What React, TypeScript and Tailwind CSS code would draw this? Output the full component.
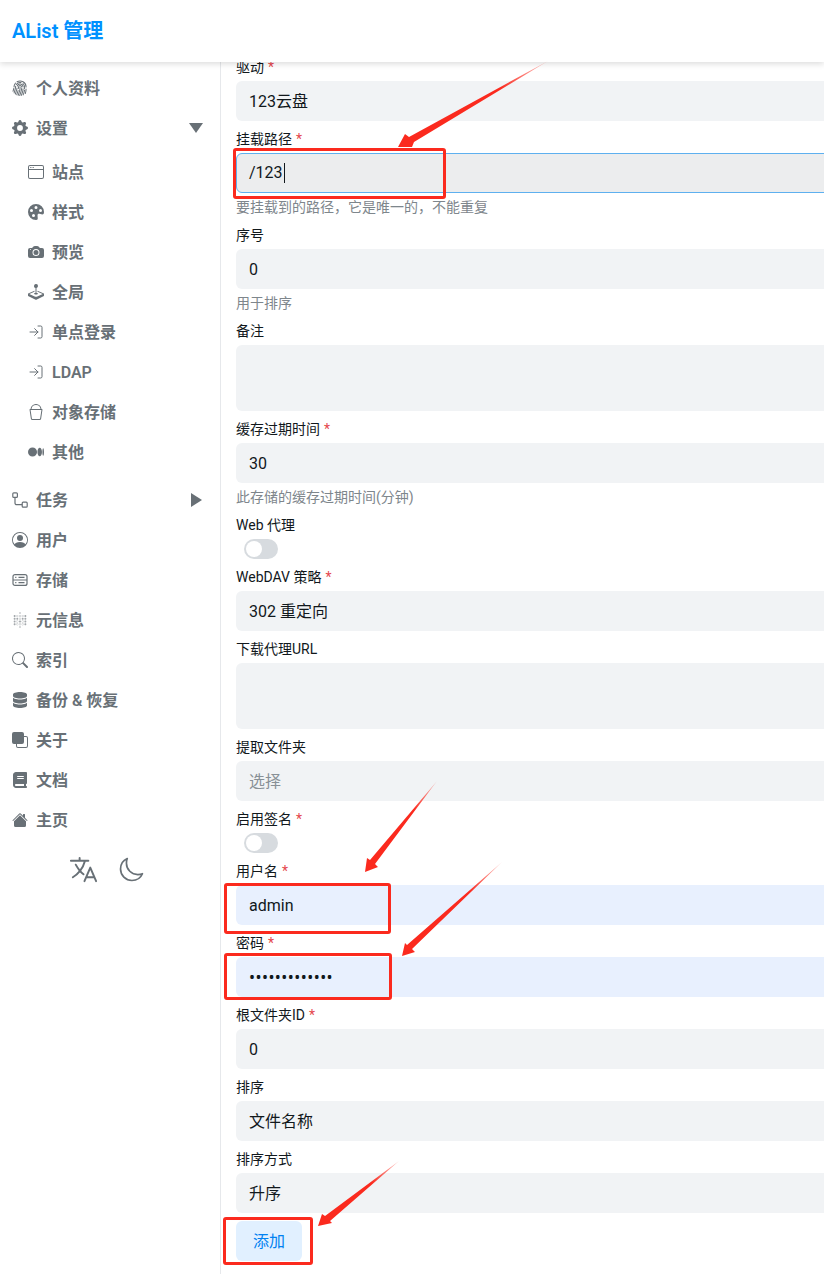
import type { ReactNode } from "react";
import {
  BsFingerprint,
  BsGearFill,
  BsWindow,
  BsPaletteFill,
  BsCameraFill,
  BsJoystick,
  BsBucket,
  BsMedium,
  BsPersonCircle,
  BsSearch,
  BsFront,
  BsHouseFill,
} from "react-icons/bs";
import { FaDatabase, FaBook } from "react-icons/fa6";
import { FiLogIn } from "react-icons/fi";
import { SiMetabase } from "react-icons/si";
import { IoLanguageOutline, IoMoonOutline } from "react-icons/io5";

const TasksIcon = () => (
  <svg width="16" height="16" viewBox="0 0 16 16" fill="none" stroke="currentColor" strokeWidth="1.2">
    <rect x="0.8" y="0.8" width="4.6" height="4.6" rx="1" />
    <rect x="10.2" y="10.2" width="5" height="5" rx="1" />
    <path d="M3 5.4V11a1.7 1.7 0 0 0 1.7 1.7h5.5" />
  </svg>
);

const StorageIcon = () => (
  <svg width="16" height="16" viewBox="0 0 16 16" fill="none" stroke="currentColor" strokeWidth="1.2">
    <rect x="1" y="2.6" width="14" height="10.8" rx="2" />
    <path d="M1 8h14M6.5 5.3h6M6.5 10.7h6" />
    <path d="M3.2 5.3h1.2M3.2 10.7h1.2" />
  </svg>
);

const TOP_ITEMS = [
  { label: "任务", icon: <TasksIcon />, arrow: true },
  { label: "用户", icon: <BsPersonCircle size={16} /> },
  { label: "存储", icon: <StorageIcon /> },
  { label: "元信息", icon: <SiMetabase size={16} className="opacity-60" /> },
  { label: "索引", icon: <BsSearch size={16} /> },
  { label: "备份 & 恢复", icon: <FaDatabase size={16} /> },
  { label: "关于", icon: <BsFront size={16} /> },
  { label: "文档", icon: <FaBook size={16} /> },
  { label: "主页", icon: <BsHouseFill size={16} /> },
];

const SETTINGS_ITEMS = [
  { label: "站点", icon: <BsWindow size={16} /> },
  { label: "样式", icon: <BsPaletteFill size={16} /> },
  { label: "预览", icon: <BsCameraFill size={16} /> },
  { label: "全局", icon: <BsJoystick size={16} /> },
  { label: "单点登录", icon: <FiLogIn size={16} strokeWidth={1.5} /> },
  { label: "LDAP", icon: <FiLogIn size={16} strokeWidth={1.5} /> },
  { label: "对象存储", icon: <BsBucket size={16} /> },
  { label: "其他", icon: <BsMedium size={16} /> },
];

const NavRow = ({ icon, label, child, right }: { icon: ReactNode; label: string; child?: boolean; right?: ReactNode }) => (
  <div className={`flex h-10 items-center gap-2 text-base font-semibold text-[#687076] ${child ? "pl-7" : "pl-3"}`}>
    <span className="flex w-4 justify-center">{icon}</span>
    <span className="pt-[2px]">{label}</span>
    {right && <span className="ml-auto mr-[17px] flex w-[14px] justify-center">{right}</span>}
  </div>
);

const Label = ({ text, required }: { text: string; required?: boolean }) => (
  <div className="mb-1 h-5 text-sm leading-5 text-[#11181c]">
    {text}
    {required && <span className="ml-1 text-[#e5484d]">*</span>}
  </div>
);

const Help = ({ text }: { text: string }) => <div className="mt-1 text-sm leading-5 text-[#7e868c]">{text}</div>;

const Input = ({ value, type, placeholder, autofill }: { value?: string; type?: string; placeholder?: string; autofill?: boolean }) => {
  const hasCjk = /[^\x00-\x7f]/.test(value ?? "");
  return (
    <input
      readOnly
      type={type ?? "text"}
      value={value ?? ""}
      placeholder={placeholder}
      className={`block h-10 w-full rounded-md px-[13px] text-base text-[#11181c] outline-none placeholder:text-[#889096] ${
        autofill ? "bg-[#e8f0fe]" : "bg-[#f1f3f5]"
      } ${type === "password" ? "font-['Noto_Sans',sans-serif] tracking-[0.45px]" : ""} ${hasCjk ? "pb-[2px]" : ""}`}
    />
  );
};

const Switch = () => (
  <div className="ml-2 flex h-5 w-[34px] items-center rounded-full bg-[#d7dbdf] pl-[2px]">
    <div className="h-4 w-4 rounded-full bg-white" />
  </div>
);

const Field = ({ children }: { children: ReactNode }) => <div className="mb-2">{children}</div>;

const RedBox = ({ className }: { className: string }) => (
  <div className={`absolute rounded-[3px] border-[3px] border-[#fb2a1e] ${className}`} />
);

const ARROWS = [
  { id: "a1", points: "548,61 414,142 412,147 398,147 405,134 409,137", x1: 548, y1: 61, x2: 500, y2: 90 },
  { id: "a2", points: "437,781 375,864 378,867 365,872 367,858 370,860", x1: 437, y1: 781, x2: 415, y2: 811 },
  { id: "a3", points: "502,862 412,949 415,952 402,956 405,943 407,945", x1: 502, y1: 862, x2: 470, y2: 893 },
  { id: "a4", points: "399,1161 330,1221 332,1223 318,1226 322,1214 325,1216", x1: 399, y1: 1161, x2: 372, y2: 1184 },
];

export default function App() {
  return (
    <div className="relative h-[1274px] w-[824px] overflow-hidden bg-white font-['Roboto','Noto_Sans_CJK_SC',sans-serif]">
      <header className="relative z-10 flex h-[62px] items-center bg-white pl-3 shadow-[0_2px_6px_rgba(0,0,0,0.14)]">
        <span className="text-xl font-semibold text-[#0091ff]">AList 管理</span>
      </header>

      <div className="flex h-[1212px]">
        <aside className="w-[221px] shrink-0 border-r border-[#e6e8eb] pt-[6px]">
          <NavRow label="个人资料" icon={<BsFingerprint size={16} />} />
          <NavRow
            label="设置"
            icon={<BsGearFill size={16} />}
            right={
              <svg width="14" height="10" viewBox="0 0 14 10" fill="currentColor">
                <polygon points="0,0 14,0 7,10" />
              </svg>
            }
          />
          <div className="pt-1">
            {SETTINGS_ITEMS.map((item) => (
              <NavRow key={item.label} label={item.label} icon={item.icon} child />
            ))}
          </div>
          <div className="pt-2">
            {TOP_ITEMS.map((item) => (
              <NavRow
                key={item.label}
                label={item.label}
                icon={item.icon}
                right={
                  item.arrow ? (
                    <svg width="11" height="14" viewBox="0 0 11 14" fill="currentColor">
                      <polygon points="0,0 11,7 0,14" />
                    </svg>
                  ) : undefined
                }
              />
            ))}
          </div>
          <div className="mt-[14px] flex items-center justify-center gap-[19px] pr-[7px] text-[#687076]">
            <IoLanguageOutline size={31} />
            <IoMoonOutline size={27} />
          </div>
        </aside>

        <main className="-mt-[5px] min-w-0 flex-1 pl-[15px]">
          <div className="w-[700px]">
            <Field>
              <Label text="驱动" required />
              <Input value="123云盘" />
            </Field>
            <Field>
              <Label text="挂载路径" required />
              <div className="flex h-10 items-center rounded-md border border-[#5eb0ef] bg-[#ecedee] px-3 text-base text-[#11181c]">
                /123
                <span className="ml-px h-5 w-px bg-[#11181c]" />
              </div>
              <Help text="要挂载到的路径，它是唯一的，不能重复" />
            </Field>
            <Field>
              <Label text="序号" />
              <Input value="0" />
              <Help text="用于排序" />
            </Field>
            <Field>
              <Label text="备注" />
              <div className="h-[66px] rounded-md bg-[#f1f3f5]" />
            </Field>
            <Field>
              <Label text="缓存过期时间" required />
              <Input value="30" />
              <Help text="此存储的缓存过期时间(分钟)" />
            </Field>
            <Field>
              <Label text="Web 代理" />
              <Switch />
            </Field>
            <Field>
              <Label text="WebDAV 策略" required />
              <Input value="302 重定向" />
            </Field>
            <Field>
              <Label text="下载代理URL" />
              <div className="h-[66px] rounded-md bg-[#f1f3f5]" />
            </Field>
            <Field>
              <Label text="提取文件夹" />
              <Input placeholder="选择" />
            </Field>
            <Field>
              <Label text="启用签名" required />
              <Switch />
            </Field>
            <Field>
              <Label text="用户名" required />
              <Input value="admin" autofill />
            </Field>
            <Field>
              <Label text="密码" required />
              <Input value="1234567890123" type="password" autofill />
            </Field>
            <Field>
              <Label text="根文件夹ID" required />
              <Input value="0" />
            </Field>
            <Field>
              <Label text="排序" />
              <Input value="文件名称" />
            </Field>
            <Field>
              <Label text="排序方式" />
              <Input value="升序" />
            </Field>
            <button className="h-10 w-[66px] rounded-md bg-[#e1f0ff] pt-[2px] text-base text-[#0081f1]">添加</button>
          </div>
        </main>
      </div>

      <RedBox className="left-[233px] top-[148px] h-[51px] w-[213px]" />
      <RedBox className="left-[224px] top-[883px] h-[51px] w-[167px]" />
      <RedBox className="left-[224px] top-[953px] h-[47px] w-[168px]" />
      <RedBox className="left-[223px] top-[1217px] h-[48px] w-[90px]" />

      <svg className="pointer-events-none absolute left-0 top-0 z-20" width="824" height="1274">
        <defs>
          {ARROWS.map((a) => (
            <linearGradient key={a.id} id={a.id} gradientUnits="userSpaceOnUse" x1={a.x1} y1={a.y1} x2={a.x2} y2={a.y2}>
              <stop offset="0" stopColor="#fb2a1e" stopOpacity="0.25" />
              <stop offset="1" stopColor="#fb2a1e" />
            </linearGradient>
          ))}
        </defs>
        {ARROWS.map((a) => (
          <polygon key={a.id} points={a.points} fill={`url(#${a.id})`} />
        ))}
      </svg>
    </div>
  );
}
